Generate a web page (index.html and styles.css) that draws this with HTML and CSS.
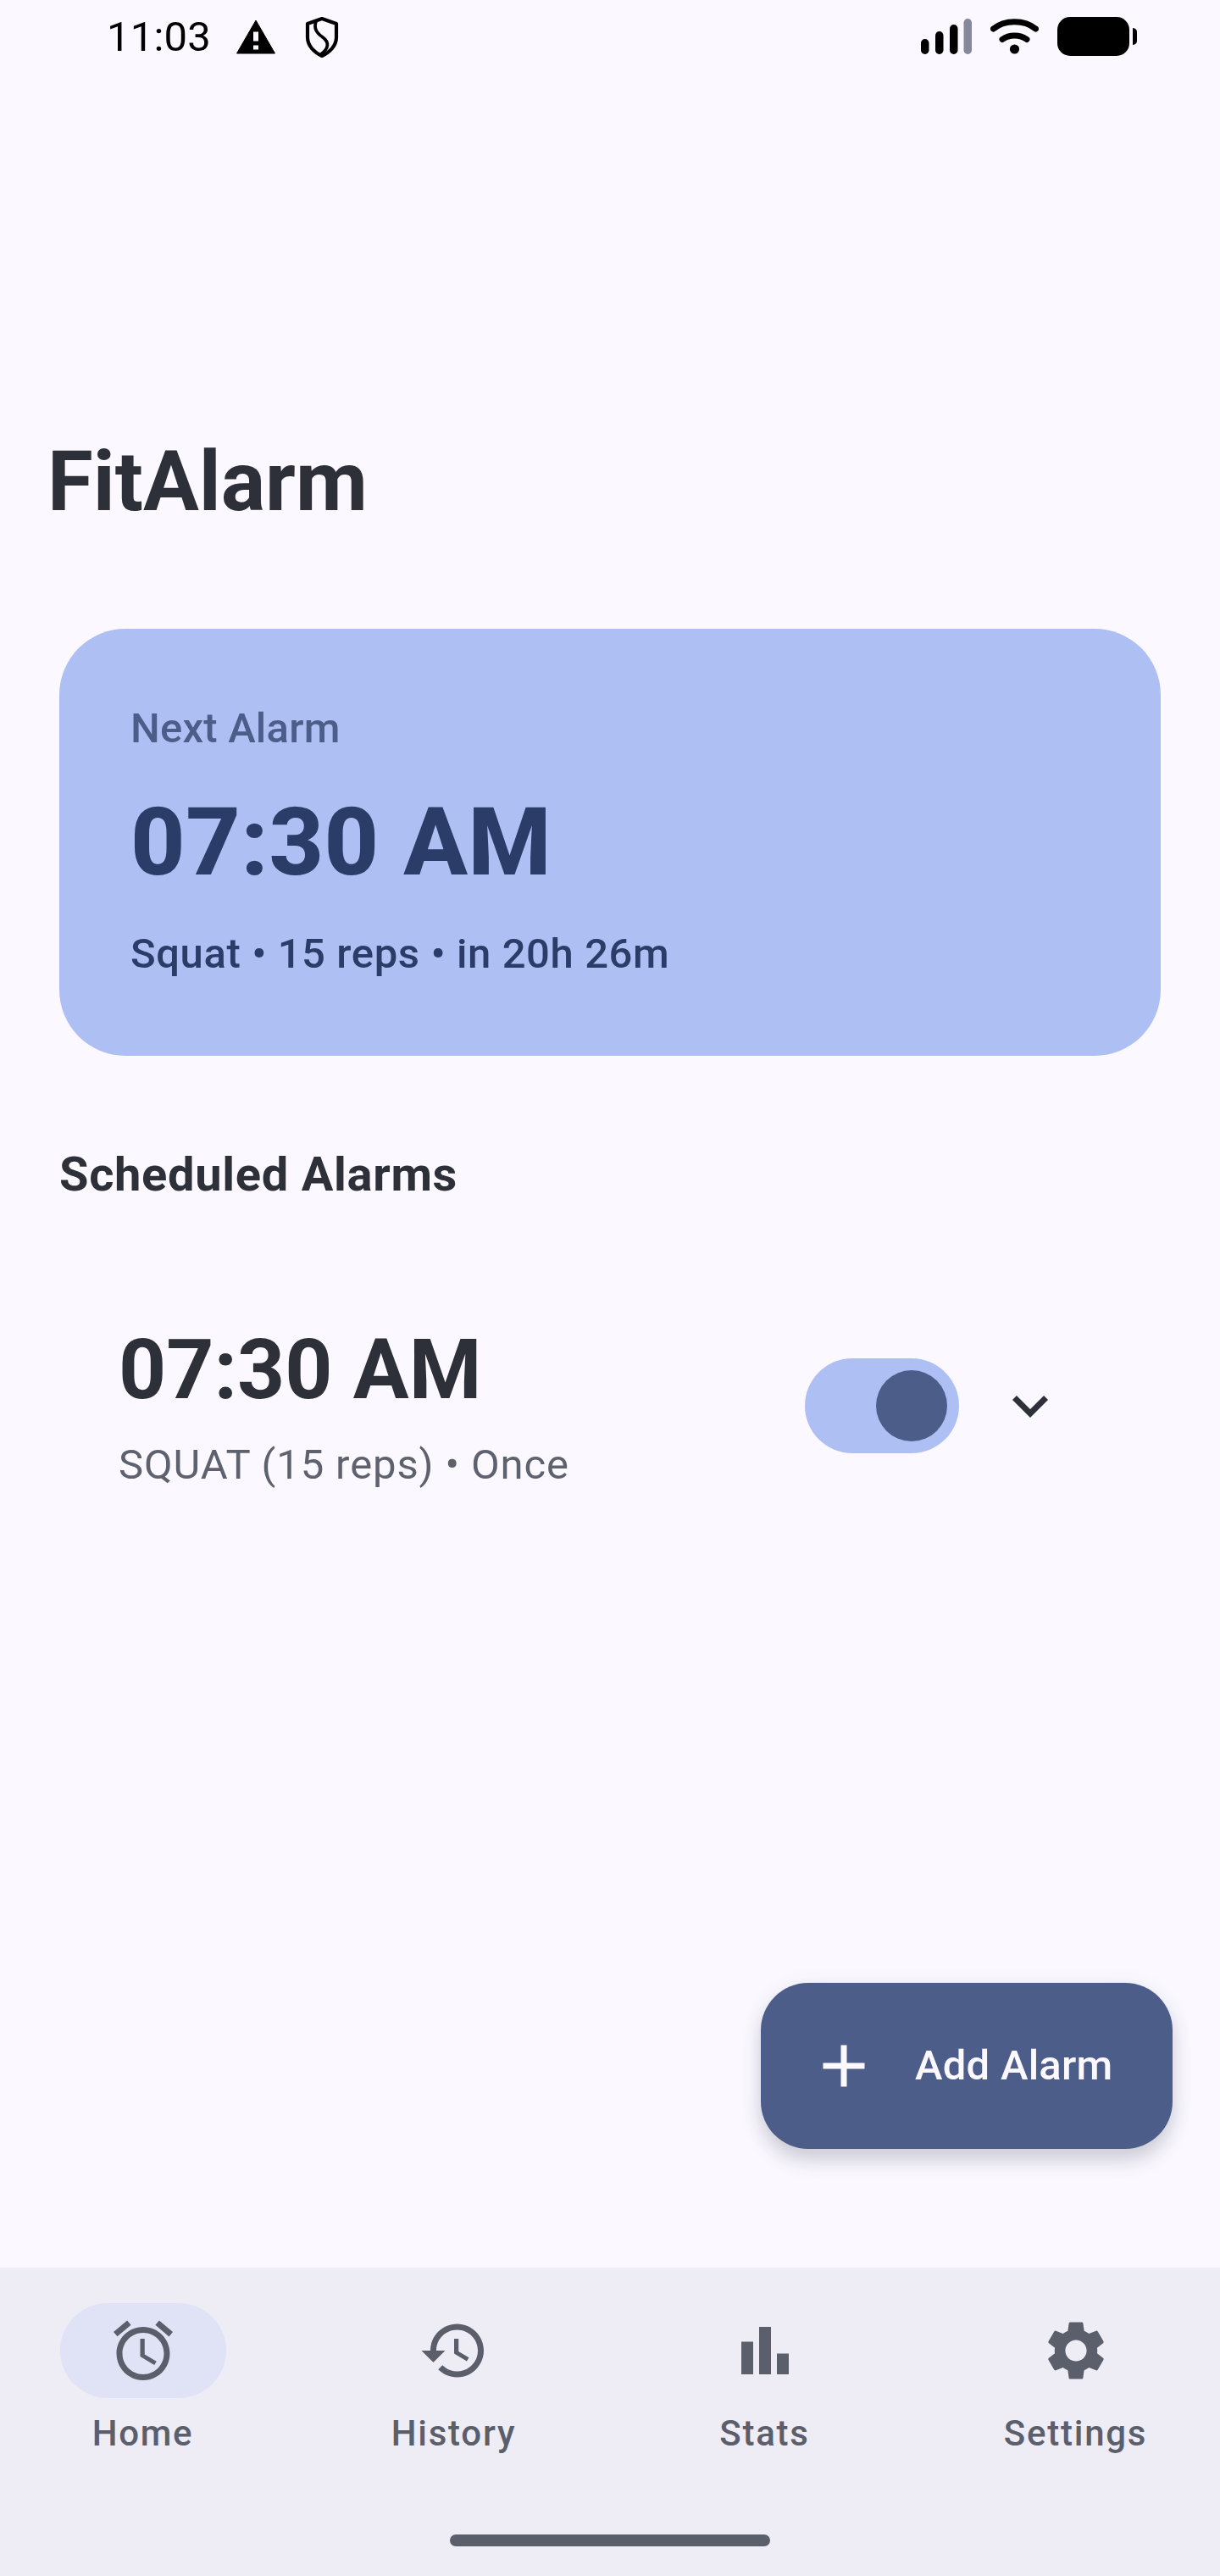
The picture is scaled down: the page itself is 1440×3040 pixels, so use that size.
FILE: index.html
```html
<!DOCTYPE html>
<html lang="en">
<head>
<meta charset="utf-8">
<title>FitAlarm</title>
<link rel="stylesheet" href="styles.css">
</head>
<body>
<div class="screen">
  <header class="status">
    <div class="status-left">
      <span class="clock">11:03</span>
      <svg class="warn" viewBox="0 0 46 41"><path d="M23 1 L45.5 40 H0.5 Z M19.5 14 V26 H26.5 V14 Z M19.5 30 V36 H26.5 V30 Z" fill="#000" fill-rule="evenodd" stroke="#000" stroke-width="1" stroke-linejoin="round"/></svg>
      <svg class="shield" viewBox="0 0 40 48"><path d="M20 2 L37 8 V24 C37 34 29 42 20 46 C11 42 3 34 3 24 V8 Z" fill="none" stroke="#000" stroke-width="4.2" stroke-linejoin="round"/><path d="M13 5 C10 14 14 19 21 24 C29 30 28 37 19 44" fill="none" stroke="#000" stroke-width="3.8"/></svg>
    </div>
    <div class="status-right">
      <svg class="signal" viewBox="0 0 60 42"><g fill="#000"><rect x="0" y="24" width="9.5" height="18" rx="4.7"/><rect x="17" y="15" width="9.5" height="27" rx="4.7"/><rect x="34" y="7" width="9.5" height="35" rx="4.7"/></g><rect x="50.5" y="0" width="9.5" height="42" rx="4.7" fill="#858999"/></svg>
      <svg class="wifi" viewBox="0 0 57 42"><path d="M3.5 12 C17 1 40 1 53.5 12" fill="none" stroke="#000" stroke-width="7" stroke-linecap="round"/><path d="M14 24.5 C22 18.5 35 18.5 43 24.5" fill="none" stroke="#000" stroke-width="7" stroke-linecap="round"/><circle cx="28.5" cy="36" r="5.6" fill="#000"/></svg>
      <svg class="battery" viewBox="0 0 94 46"><rect x="0" y="0" width="85" height="46" rx="15" fill="#000"/><path d="M89 13 Q94 13.5 94 18 V28 Q94 32.5 89 33 Z" fill="#000"/></svg>
    </div>
  </header>

  <main class="content">
    <h1 class="title">FitAlarm</h1>

    <section class="next-card">
      <p class="next-label">Next Alarm</p>
      <p class="next-time">07:30 AM</p>
      <p class="next-detail">Squat • 15 reps • in 20h 26m</p>
    </section>

    <h2 class="section-title">Scheduled Alarms</h2>

    <article class="alarm-row">
      <div class="alarm-text">
        <p class="alarm-time">07:30 AM</p>
        <p class="alarm-detail">SQUAT (15 reps) • Once</p>
      </div>
      <div class="toggle"><span class="thumb"></span></div>
      <svg class="chevron" viewBox="0 0 24 24"><path fill="#2d2f39" d="M7.41 8.59L12 13.17l4.59-4.58L18 10l-6 6-6-6 1.41-1.41z"/></svg>
    </article>

    <div class="fab-wrap">
      <button class="fab">
        <svg class="plus" viewBox="0 0 24 24"><path fill="#fbf9ff" d="M19 13h-6v6h-2v-6H5v-2h6V5h2v6h6v2z"/></svg>
        <span>Add Alarm</span>
      </button>
    </div>
  </main>

  <nav class="nav">
    <div class="nav-items">
      <div class="nav-item">
        <div class="pill active">
          <svg class="nav-icon" viewBox="0 0 24 24"><path fill="#5b5e6b" d="M22 5.72l-4.6-3.86-1.29 1.53 4.6 3.86L22 5.72zM7.88 3.39L6.6 1.86 2 5.71l1.29 1.53 4.59-3.85zM12.5 8H11v6l4.75 2.85.75-1.23-4-2.37V8zM12 4c-4.97 0-9 4.03-9 9s4.03 9 9 9 9-4.03 9-9-4.03-9-9-9zm0 16c-3.87 0-7-3.13-7-7s3.13-7 7-7 7 3.13 7 7-3.13 7-7 7z"/></svg>
        </div>
        <span class="nav-label">Home</span>
      </div>
      <div class="nav-item">
        <div class="pill">
          <svg class="nav-icon" viewBox="0 0 24 24"><path fill="#5b5e6b" d="M13 3c-4.97 0-9 4.03-9 9H1l3.89 3.89.07.14L9 12H6c0-3.87 3.13-7 7-7s7 3.13 7 7-3.13 7-7 7c-1.93 0-3.68-.79-4.94-2.06l-1.42 1.42C8.27 19.99 10.51 21 13 21c4.97 0 9-4.03 9-9s-4.03-9-9-9zm-1 5v5l4.28 2.54.72-1.21-3.5-2.08V8H12z"/></svg>
        </div>
        <span class="nav-label">History</span>
      </div>
      <div class="nav-item">
        <div class="pill">
          <svg class="nav-icon" viewBox="0 0 24 24"><path fill="#5b5e6b" d="M4 9h4v11H4zM16 13h4v7h-4zM10 4h4v16h-4z"/></svg>
        </div>
        <span class="nav-label">Stats</span>
      </div>
      <div class="nav-item">
        <div class="pill">
          <svg class="nav-icon" viewBox="0 0 24 24"><path fill="#5b5e6b" d="M19.14 12.94c.04-.3.06-.61.06-.94 0-.32-.02-.64-.07-.94l2.03-1.58c.18-.14.23-.41.12-.61l-1.92-3.32c-.12-.22-.37-.29-.59-.22l-2.39.96c-.5-.38-1.03-.7-1.62-.94l-.36-2.54c-.04-.24-.24-.41-.48-.41h-3.84c-.24 0-.43.17-.47.41l-.36 2.54c-.59.24-1.13.57-1.62.94l-2.39-.96c-.22-.08-.47 0-.59.22L2.74 8.87c-.12.21-.08.47.12.61l2.03 1.58c-.05.3-.09.63-.09.94s.02.64.07.94l-2.03 1.58c-.18.14-.23.41-.12.61l1.92 3.32c.12.22.37.29.59.22l2.39-.96c.5.38 1.03.7 1.62.94l.36 2.54c.05.24.24.41.48.41h3.84c.24 0 .44-.17.47-.41l.36-2.54c.59-.24 1.13-.56 1.62-.94l2.39.96c.22.08.47 0 .59-.22l1.92-3.32c.12-.22.07-.47-.12-.61l-2.01-1.58zM12 15.6c-1.98 0-3.6-1.62-3.6-3.6s1.62-3.6 3.6-3.6 3.6 1.62 3.6 3.6-1.62 3.6-3.6 3.6z"/></svg>
        </div>
        <span class="nav-label">Settings</span>
      </div>
    </div>
    <div class="home-bar"></div>
  </nav>
</div>
</body>
</html>
```
FILE: styles.css
```css
* { box-sizing: border-box; }
html, body { margin: 0; padding: 0; }
body { background: #fbf9ff; font-family: Roboto, "Noto Sans", sans-serif; overflow: hidden; }
p, h1, h2 { margin: 0; }
.screen { width: 1440px; height: 3040px; display: flex; flex-direction: column; background: #fbf9ff; overflow: hidden; }

.status { height: 90px; flex: none; display: flex; justify-content: space-between; padding: 0 98px 0 126px; }
.status-left { display: flex; align-items: flex-start; }
.clock { font-size: 49px; line-height: 57px; letter-spacing: 0.2px; color: #000; margin-top: 15px; }
.warn { width: 46px; height: 41px; margin: 23px 0 0 30px; }
.shield { width: 40px; height: 48px; margin: 20px 0 0 35px; }
.status-right { display: flex; align-items: flex-start; }
.signal { width: 60px; height: 42px; margin-top: 22px; }
.wifi { width: 57px; height: 42px; margin: 22px 0 0 22px; }
.battery { width: 94px; height: 46px; margin: 20px 0 0 22px; }

.content { flex: 1; display: flex; flex-direction: column; padding: 0 70px; }
.title { font-size: 98px; font-weight: 700; line-height: 114px; color: #2d2f39; margin: 422px 0 0 -14px; }
.next-card { height: 504px; margin-top: 116px; background: #aec0f3; border-radius: 78px; padding: 89px 84px 0; }
.next-label { font-size: 49px; font-weight: 500; line-height: 58px; letter-spacing: 0.2px; color: #4c5d89; }
.next-time { font-size: 112px; font-weight: 800; line-height: 130px; letter-spacing: 0.55px; color: #2b3c68; margin-top: 40px; }
.next-detail { font-size: 49px; font-weight: 500; line-height: 58px; letter-spacing: 0.6px; color: #2b3c68; margin-top: 38px; }
.section-title { font-size: 56px; font-weight: 700; line-height: 66px; letter-spacing: 0.7px; color: #2d2f39; margin-top: 107px; }
.alarm-row { display: flex; align-items: center; margin-top: 141px; padding-left: 70px; }
.alarm-text { width: 810px; }
.alarm-time { font-size: 98px; font-weight: 700; line-height: 114px; color: #2d2f39; }
.alarm-detail { font-size: 49px; line-height: 58px; letter-spacing: 0.875px; color: #5e616e; margin-top: 26px; }
.toggle { width: 182px; height: 112px; border-radius: 56px; background: #aec0f3; display: flex; align-items: center; justify-content: flex-end; padding-right: 14px; }
.thumb { width: 84px; height: 84px; border-radius: 50%; background: #4c5d89; }
.chevron { width: 84px; height: 84px; margin-left: 42px; }

.fab-wrap { margin-top: auto; display: flex; justify-content: flex-end; margin-right: -14px; margin-bottom: 140px; }
.fab { width: 486px; height: 196px; border: 0; border-radius: 56px; background: #4c5d89; box-shadow: 0 14px 22px rgba(60,62,80,.2), 0 4px 26px rgba(76,93,137,.08); color: #fbf9ff; display: flex; align-items: center; padding: 0 0 0 56px; font-family: inherit; font-size: 49px; line-height: 58px; font-weight: 500; letter-spacing: 0.25px; }
.plus { width: 84px; height: 84px; margin-right: 42px; }

.nav { height: 364px; flex: none; background: #eeedf6; position: relative; }
.nav-items { display: grid; grid-template-columns: repeat(4, 1fr); width: 1468px; margin-left: -15px; padding-top: 42px; }
.nav-item { display: flex; flex-direction: column; align-items: center; }
.pill { width: 196px; height: 112px; border-radius: 56px; display: flex; align-items: center; justify-content: center; }
.pill.active { background: #dfe3f5; }
.nav-icon { width: 84px; height: 84px; }
.nav-label { font-size: 42px; line-height: 50px; color: #5b5e6b; font-weight: 500; letter-spacing: 1.75px; margin-top: 17px; }
.home-bar { position: absolute; left: 531px; top: 315px; width: 378px; height: 14px; border-radius: 7px; background: #5b5e6b; }
```
